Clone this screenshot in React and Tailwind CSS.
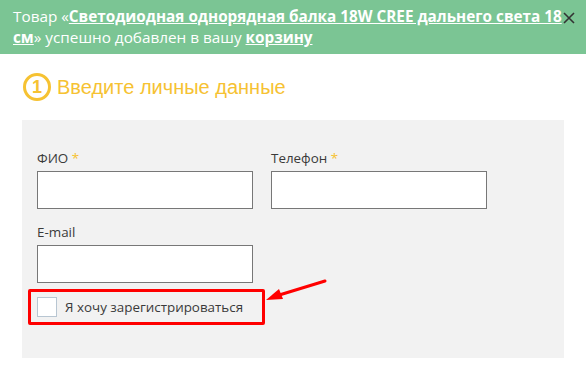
import React from "react";

export default function App() {
  const font = { fontFamily: '"Open Sans", "Noto Sans", sans-serif' };
  return (
    <div className="w-[586px] h-[374px] bg-white relative overflow-hidden" style={font}>
      <div className="bg-[#7bc594] h-[54px] pl-[13px] pr-[10px] pt-[6px] text-white text-[15.3px] leading-[21px] relative whitespace-nowrap">
        Товар «<a className="font-bold underline">Светодиодная однорядная балка 18W CREE дальнего света 18<br />см</a>» успешно добавлен в вашу <a className="font-bold underline">корзину</a>
        <span className="absolute right-[11px] top-[12px] leading-none">
          <svg width="12" height="12" viewBox="0 0 12 12"><path d="M1 1 L11 11 M11 1 L1 11" stroke="#333" strokeWidth="1.6" /></svg>
        </span>
      </div>
      <div className="flex items-start gap-[6px] pl-[23px] pt-[19px] h-[66px]">
        <div className="w-[28px] h-[28px] rounded-full border-[3px] border-[#f6c232] flex items-center justify-center text-[#f6c232] font-bold text-[18px] leading-none" style={{ fontFamily: '"Liberation Sans", Arial, sans-serif' }}>1</div>
        <div className="text-[#f6c232] text-[20px] leading-[28px]" style={{ fontFamily: '"Liberation Sans", Arial, sans-serif' }}>Введите личные данные</div>
      </div>
      <div className="mx-[22px] bg-[#f2f2f2] h-[238px] pt-[29px] pl-[15px] text-[13.4px] text-[#3a3a3a]">
        <div className="flex gap-[18px]">
          <div className="flex flex-col">
            <div className="h-[22px] leading-[18px]">ФИО <span className="text-[#f6c232]">*</span></div>
            <div className="w-[216px] h-[38px] bg-white border border-[#777]"></div>
          </div>
          <div className="flex flex-col">
            <div className="h-[22px] leading-[18px]">Телефон <span className="text-[#f6c232]">*</span></div>
            <div className="w-[216px] h-[38px] bg-white border border-[#777]"></div>
          </div>
        </div>
        <div className="flex flex-col mt-[14px]">
          <div className="h-[22px] leading-[18px]">E-mail</div>
          <div className="w-[216px] h-[38px] bg-white border border-[#777]"></div>
        </div>
        <div className="-ml-[9px] mt-[6px] w-[237px] h-[36px] border-[3px] border-[#ff0000] rounded-[2px] flex items-center pl-[6px] gap-[8px]">
          <div className="w-[20px] h-[20px] bg-white border border-[#b8c6d2]"></div>
          <span>Я хочу зарегистрироваться</span>
        </div>
      </div>
      <svg className="absolute left-0 top-0" width="586" height="374" viewBox="0 0 586 374">
        <line x1="325" y1="281" x2="276" y2="296" stroke="#ff0000" strokeWidth="3" strokeLinecap="round" />
        <polygon points="266,300 279,289 283,299" fill="#ff0000" />
      </svg>
    </div>
  );
}
